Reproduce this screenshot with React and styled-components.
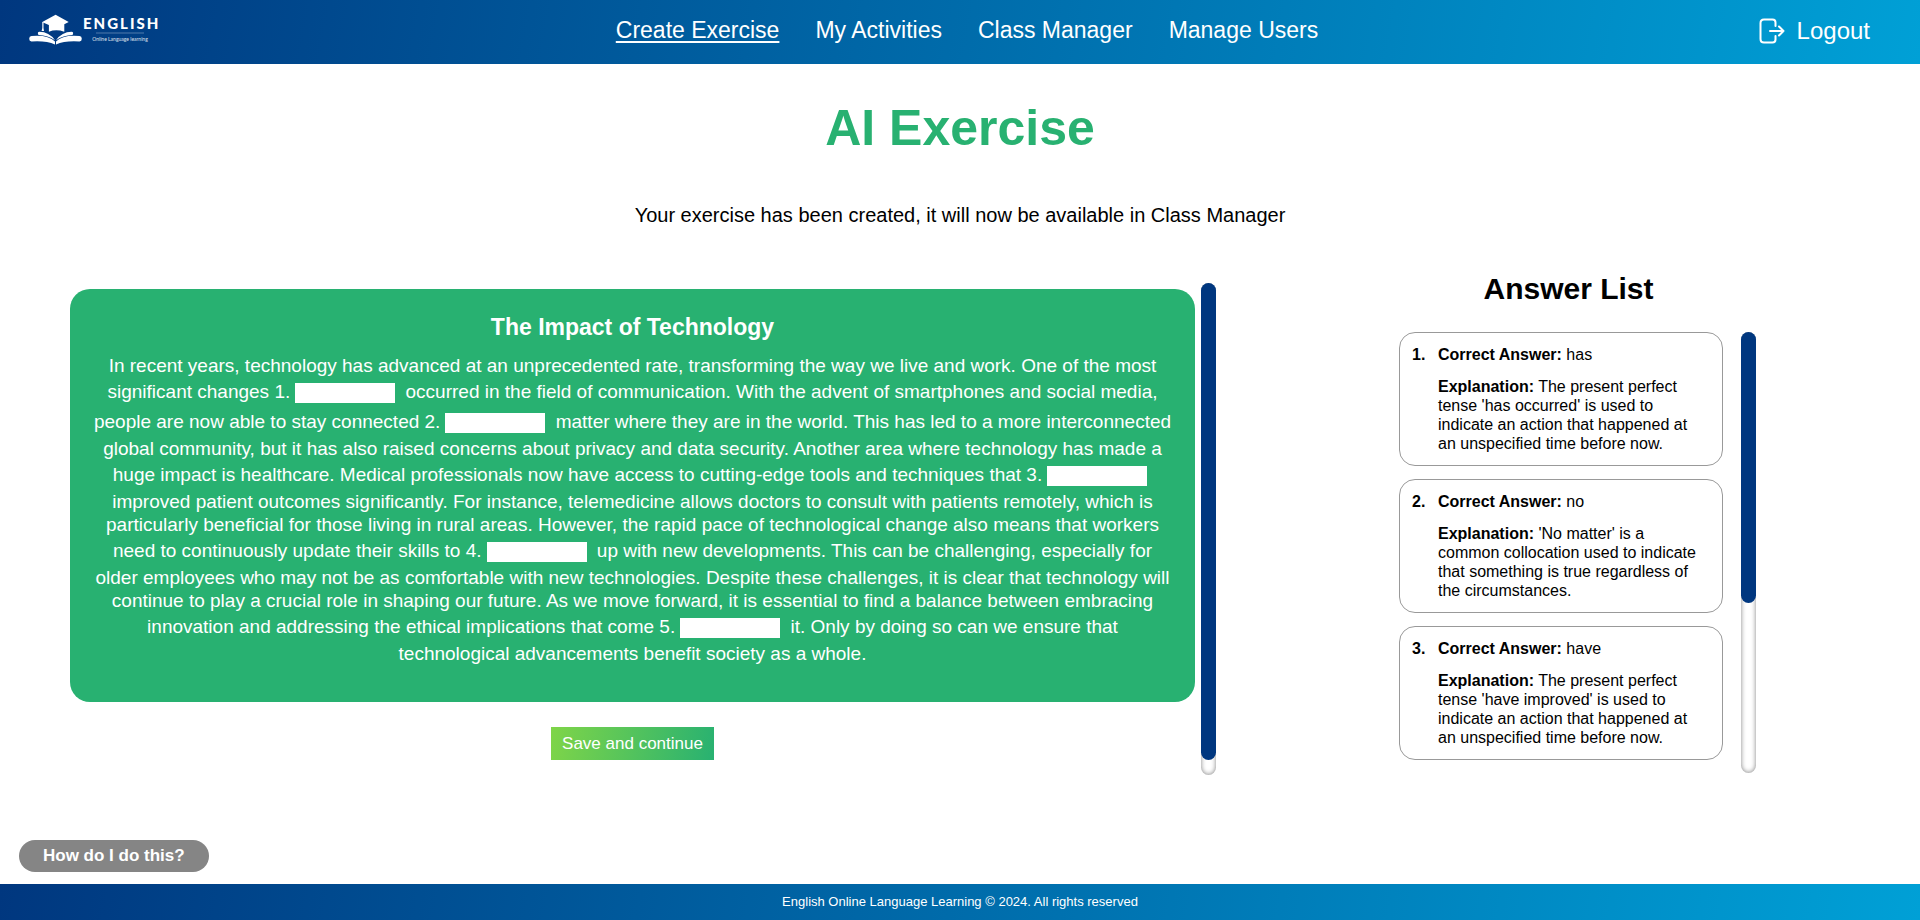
import React from "react";
import styled, { createGlobalStyle } from "styled-components";

const GlobalStyle = createGlobalStyle`
  *, *::before, *::after { box-sizing: border-box; }
  body {
    margin: 0;
    background: #fff;
    color: #000;
    font-family: Arial, "Liberation Sans", sans-serif;
  }
  h1, h2, h3, p, ol { margin: 0; padding: 0; }
`;

const brandGradient = "linear-gradient(100deg, #00377f, #00a0d6)";

const Page = styled.div`
  min-height: 100vh;
  display: flex;
  flex-direction: column;
`;

const Header = styled.header`
  height: 64px;
  padding: 0 50px 0 28px;
  display: grid;
  grid-template-columns: 1fr auto 1fr;
  align-items: center;
  background: ${brandGradient};
`;

const HomeLink = styled.a`
  display: block;
  justify-self: start;
  height: 36px;
`;

const Nav = styled.nav`
  display: flex;
  gap: 36px;
  padding: 0 0 4px 36px;
`;

const NavLink = styled.a`
  color: #fff;
  font-size: 23px;
  line-height: 28px;
  text-underline-offset: 3px;
  text-decoration: ${({ $active }) => ($active ? "underline 2px" : "none")};
`;

const LogoutLink = styled.a`
  justify-self: end;
  display: flex;
  align-items: center;
  gap: 12px;
  padding-bottom: 2px;
  color: #fff;
  font-size: 24px;
  line-height: 28px;
  text-decoration: none;
`;

const Title = styled.h1`
  margin-top: 35px;
  text-align: center;
  color: #28b171;
  font-size: 50px;
  line-height: 58px;
`;

const Message = styled.p`
  margin-top: 46px;
  text-align: center;
  font-size: 20px;
  line-height: 24px;
`;

const Workspace = styled.main`
  flex: 1;
  display: grid;
  grid-template-columns: minmax(0, 1fr) 357px;
  column-gap: 183px;
  align-items: start;
  padding: 56px 164px 0 70px;
`;

const ScrollArea = styled.div`
  display: flex;
  gap: ${({ $gap }) => $gap}px;
`;

const ScrollTrack = styled.div`
  flex: 0 0 15px;
  border-radius: 8px;
  background: #fff;
  box-shadow: inset 0 0 5px #808080;
`;

const ScrollThumb = styled.div`
  height: ${({ $size }) => $size}%;
  border-radius: 8px;
  background: #00377f;
`;

const ExerciseColumn = styled.section`
  flex: 1;
  display: flex;
  flex-direction: column;
  align-items: center;
  gap: 25px;
  padding: 6px 0 15px;
`;

const ExerciseCard = styled.article`
  width: 100%;
  padding: 24px 20px 37px;
  border-radius: 20px;
  background: #28b171;
  color: #fff;
  text-align: center;
`;

const ExerciseTitle = styled.h2`
  margin-bottom: 13px;
  font-size: 23px;
  line-height: 28px;
`;

const ExerciseText = styled.p`
  font-size: 19px;
  line-height: 23px;
`;

const Blank = styled.input`
  width: 100px;
  height: 20px;
  margin: 6px 5px 4px;
  padding: 0;
  border: 0;
  background: #fff;
  font: 16px/18px Arial, "Liberation Sans", sans-serif;
`;

const SaveButton = styled.button`
  height: 33px;
  padding: 0 11px;
  border: 0;
  background: linear-gradient(100deg, #7fd548, #28b171);
  color: #fff;
  font: 17px/20px Arial, "Liberation Sans", sans-serif;
`;

const AnswerPanel = styled.section`
  display: flex;
  flex-direction: column;
  gap: 26px;
`;

const AnswerHeading = styled.h2`
  margin-top: -12px;
  padding-right: 18px;
  text-align: center;
  font-size: 30px;
  line-height: 35px;
`;

const AnswerList = styled.ol`
  flex: 1;
  display: flex;
  flex-direction: column;
  gap: 13px;
  padding-bottom: 13px;
  list-style: none;
`;

const AnswerCard = styled.li`
  display: flex;
  padding: 12px 20px 12px 12px;
  border: 1px solid #999;
  border-radius: 16px;
  font-size: 16px;
  line-height: 19px;
`;

const AnswerNumber = styled.strong`
  flex: 0 0 26px;
`;

const AnswerBody = styled.div`
  display: flex;
  flex-direction: column;
  gap: 13px;
`;

const HelpBar = styled.div`
  padding: 0 19px 12px;
`;

const HelpButton = styled.button`
  display: block;
  height: 32px;
  padding: 0 24px;
  border: 0;
  border-radius: 16px;
  background: #858585;
  color: #fff;
  font: bold 17px/20px Arial, "Liberation Sans", sans-serif;
`;

const Footer = styled.footer`
  height: 36px;
  display: flex;
  align-items: center;
  justify-content: center;
  background: ${brandGradient};
  color: #fff;
  font-size: 13px;
  line-height: 16px;
`;

const Logo = () => (
  <svg width="132" height="36" viewBox="0 0 132 36" fill="#fff" aria-hidden="true">
    <path d="M14.300 8 27.600 .7 40.700 8 36.300 10.300V17.700Q28 14.800 20.900 17.700V11L15.600 8.700Z" />
    <path d="M14.300 8H15.500V14L16 17H13.600L14.300 14Z" />
    <path d="M11.500 17.700Q21 17.700 27 26.200Q20 21.500 10.500 21Q8.800 18 11.500 17.700Z" />
    <path d="M43.500 17.700Q34 17.700 28 26.200Q35 21.500 44.500 21Q46.200 18 43.500 17.700Z" />
    <path d="M3.500 22Q20 20.500 27 27.500V30.500Q18 26.500 3.500 27.500Q1.200 27.200 1.200 24.700Q1.200 22.200 3.500 22Z" />
    <path d="M51.500 22Q35 20.500 28 27.500V30.500Q37 26.500 51.500 27.500Q53.800 27.200 53.800 24.700Q53.800 22.200 51.500 22Z" />
    <text x="55" y="15" fontFamily="Lato, sans-serif" fontWeight="900" fontSize="15" letterSpacing="2">ENGLISH</text>
    <path d="M68 19H116" stroke="#fff" strokeOpacity=".45" strokeWidth=".7" />
    <text x="92" y="27" textAnchor="middle" fontFamily="Lato, sans-serif" fontSize="5" opacity=".85">Online Language learning</text>
  </svg>
);

const LogoutIcon = () => (
  <svg width="26" height="26" viewBox="0 0 26 26" fill="none" stroke="#fff" strokeWidth="2" strokeLinecap="round" strokeLinejoin="round" aria-hidden="true">
    <path d="M16.500 8V4.500Q16.500 1.500 13.500 1.500H5Q1.500 1.500 1.500 5V21Q1.500 24.500 5 24.500H13.500Q16.500 24.500 16.500 21.500V18" />
    <path d="M11 13H24.500M20 8.500 24.500 13 20 17.500" />
  </svg>
);

const navItems = ["Create Exercise", "My Activities", "Class Manager", "Manage Users"];

const passage = [
  "In recent years, technology has advanced at an unprecedented rate, transforming the way we live and work. One of the most significant changes 1.",
  " occurred in the field of communication. With the advent of smartphones and social media, people are now able to stay connected 2.",
  " matter where they are in the world. This has led to a more interconnected global community, but it has also raised concerns about privacy and data security. Another area where technology has made a huge impact is healthcare. Medical professionals now have access to cutting-edge tools and techniques that 3.",
  " improved patient outcomes significantly. For instance, telemedicine allows doctors to consult with patients remotely, which is particularly beneficial for those living in rural areas. However, the rapid pace of technological change also means that workers need to continuously update their skills to 4.",
  " up with new developments. This can be challenging, especially for older employees who may not be as comfortable with new technologies. Despite these challenges, it is clear that technology will continue to play a crucial role in shaping our future. As we move forward, it is essential to find a balance between embracing innovation and addressing the ethical implications that come 5.",
  " it. Only by doing so can we ensure that technological advancements benefit society as a whole.",
];

const answers = [
  { answer: "has", explanation: "The present perfect tense 'has occurred' is used to indicate an action that happened at an unspecified time before now." },
  { answer: "no", explanation: "'No matter' is a common collocation used to indicate that something is true regardless of the circumstances." },
  { answer: "have", explanation: "The present perfect tense 'have improved' is used to indicate an action that happened at an unspecified time before now." },
];

export default function App() {
  return (
    <Page>
      <GlobalStyle />
      <Header>
        <HomeLink href="#home" aria-label="English Online Language Learning">
          <Logo />
        </HomeLink>
        <Nav>
          {navItems.map((item, i) => (
            <NavLink key={item} href="#" $active={i === 0}>{item}</NavLink>
          ))}
        </Nav>
        <LogoutLink href="#logout">
          <LogoutIcon />
          Logout
        </LogoutLink>
      </Header>

      <Title>AI Exercise</Title>
      <Message>Your exercise has been created, it will now be available in Class Manager</Message>

      <Workspace>
        <ScrollArea $gap={6}>
          <ExerciseColumn>
            <ExerciseCard>
              <ExerciseTitle>The Impact of Technology</ExerciseTitle>
              <ExerciseText>
                {passage.map((part, i) => (
                  <React.Fragment key={part}>
                    {part}
                    {i < passage.length - 1 && <Blank type="text" aria-label={`Blank ${i + 1}`} />}
                  </React.Fragment>
                ))}
              </ExerciseText>
            </ExerciseCard>
            <SaveButton type="button">Save and continue</SaveButton>
          </ExerciseColumn>
          <ScrollTrack>
            <ScrollThumb $size={97} />
          </ScrollTrack>
        </ScrollArea>

        <AnswerPanel>
          <AnswerHeading>Answer List</AnswerHeading>
          <ScrollArea $gap={18}>
            <AnswerList>
              {answers.map(({ answer, explanation }, i) => (
                <AnswerCard key={answer}>
                  <AnswerNumber>{i + 1}.</AnswerNumber>
                  <AnswerBody>
                    <p><strong>Correct Answer:</strong> {answer}</p>
                    <p><strong>Explanation:</strong> {explanation}</p>
                  </AnswerBody>
                </AnswerCard>
              ))}
            </AnswerList>
            <ScrollTrack>
              <ScrollThumb $size={61.5} />
            </ScrollTrack>
          </ScrollArea>
        </AnswerPanel>
      </Workspace>

      <HelpBar>
        <HelpButton type="button">How do I do this?</HelpButton>
      </HelpBar>
      <Footer>English Online Language Learning © 2024. All rights reserved</Footer>
    </Page>
  );
}
